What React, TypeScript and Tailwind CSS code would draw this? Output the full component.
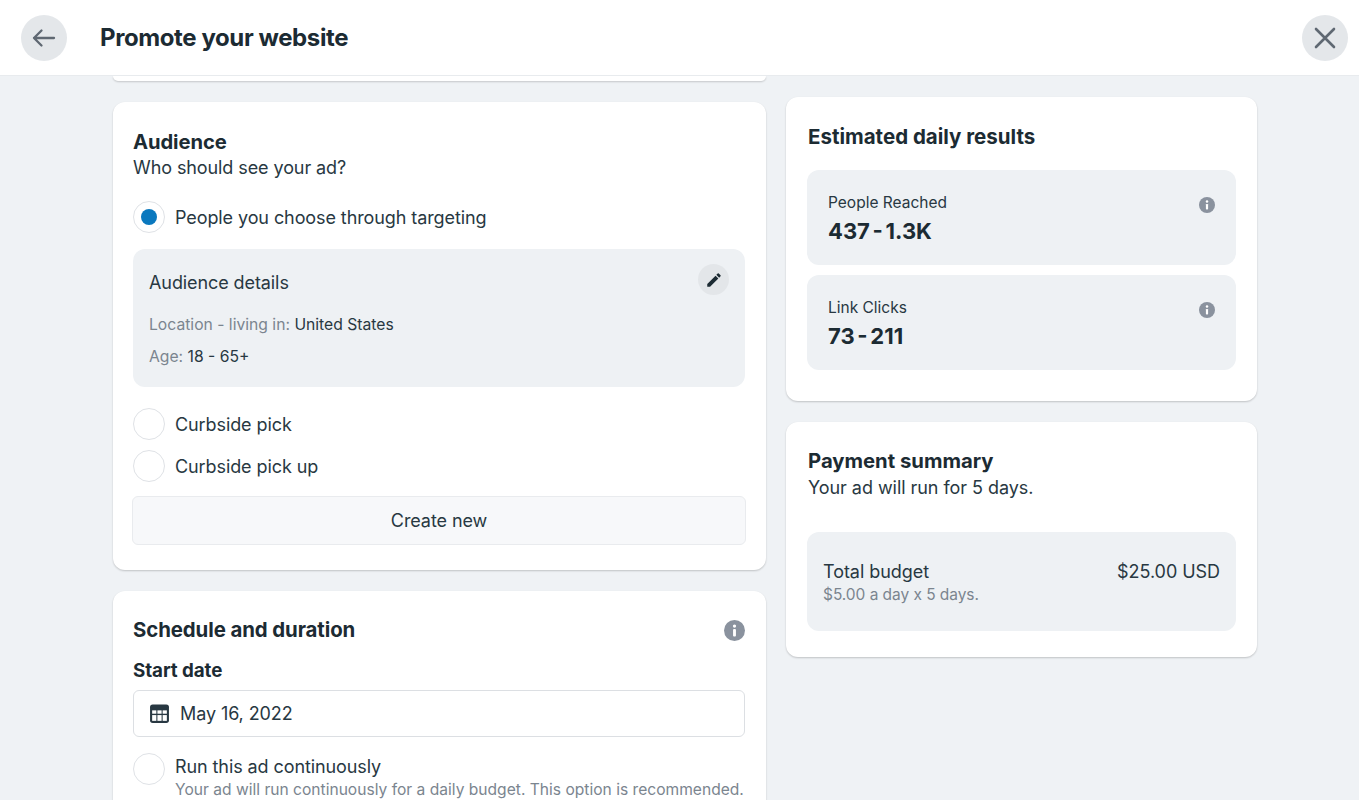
function InfoIcon({ className }: { className: string }) {
  return (
    <svg viewBox="0 0 16 16" className={className}>
      <circle cx="8" cy="8" r="8" fill="#8a929e" />
      <circle cx="8" cy="4.6" r="1.25" fill="#fff" />
      <rect x="6.9" y="6.9" width="2.2" height="5.6" rx="0.7" fill="#fff" />
    </svg>
  );
}

function Radio({ checked = false }: { checked?: boolean }) {
  return (
    <span className="w-8 h-8 shrink-0 rounded-full border border-[#dfe2e6] bg-white flex items-center justify-center">
      {checked && <span className="w-4 h-4 rounded-full bg-[#0a78be]" />}
    </span>
  );
}

function Stat({ label, value }: { label: string; value: string }) {
  return (
    <div className="h-[95px] rounded-xl bg-[#eef1f4] px-[21px] pt-[22px] flex justify-between">
      <div>
        <div className="text-[15.5px] leading-[21px] text-[#283842]">{label}</div>
        <div className="mt-[3px] text-[22px] leading-[30px] font-bold text-[#1c2b33] [word-spacing:-2.5px]">{value}</div>
      </div>
      <InfoIcon className="w-4 h-4 mt-[5px]" />
    </div>
  );
}

export default function App() {
  return (
    <div className="h-[800px] overflow-hidden flex flex-col bg-[#eff2f5] text-[#1c2b33] font-['Inter',sans-serif]">
      <header className="h-[76px] shrink-0 bg-white border-b border-[#e8ebee] flex items-center justify-between pl-[21px] pr-[11px] relative z-10">
        <div className="flex items-center">
          <button className="w-[46px] h-[46px] rounded-full bg-[#e4e7ea] flex items-center justify-center">
            <svg viewBox="0 0 24 24" className="w-6 h-6" fill="none" stroke="#5f6872" strokeWidth="2.3" strokeLinecap="round" strokeLinejoin="round">
              <path d="M2 12h20M9.5 4.5 2 12l7.5 7.5" />
            </svg>
          </button>
          <h1 className="ml-[33px] text-[24px] font-bold tracking-[-0.4px] text-[#1c2b33]">Promote your website</h1>
        </div>
        <button className="w-[46px] h-[46px] rounded-full bg-[#e4e7ea] flex items-center justify-center">
          <svg viewBox="0 0 24 24" className="w-6 h-6" fill="none" stroke="#5f6872" strokeWidth="2.6" strokeLinecap="round">
            <path d="M3 3l18 18M21 3 3 21" />
          </svg>
        </button>
      </header>

      <main className="flex items-start pl-[113px] gap-[20px]">
        {/* Left column */}
        <div className="w-[653px] shrink-0 flex flex-col tracking-[-0.09px]">
          <div className="h-[5px] bg-white rounded-b-xl shadow-[0_1px_2px_rgba(0,0,0,0.18)]" />

          <section className="mt-[21px] h-[468px] bg-white rounded-xl shadow-[0_1px_2px_rgba(0,0,0,0.2)] pl-[20px] pr-[21px] pt-[27px]">
            <h2 className="text-[20.2px] leading-[26px] font-bold">Audience</h2>
            <p className="text-[18px] leading-[26px] text-[#283842]">Who should see your ad?</p>

            <label className="mt-[20px] flex items-center gap-[10px] text-[18px] text-[#283842]">
              <Radio checked />
              People you choose through targeting
            </label>

            <div className="mt-[16px] h-[138px] rounded-xl bg-[#eef1f4] px-[16px] pt-[15px]">
              <div className="flex items-start justify-between">
                <span className="mt-[6px] text-[18px] leading-[26px] text-[#283842]">Audience details</span>
                <span className="w-[31px] h-[31px] rounded-full bg-[#e3e6e9] flex items-center justify-center">
                  <svg viewBox="0 0 24 24" className="w-[18px] h-[18px]" fill="#1c2b33">
                    <path d="M3 17.25V21h3.75L17.81 9.94l-3.75-3.75L3 17.25zM20.71 7.04a1 1 0 0 0 0-1.41l-2.34-2.34a1 1 0 0 0-1.41 0l-1.83 1.83 3.75 3.75 1.83-1.83z" />
                  </svg>
                </span>
              </div>
              <p className="mt-[18px] text-[15.7px] leading-[22px] tracking-normal text-[#7b858f]">
                Location - living in: <span className="text-[#283842]">United States</span>
              </p>
              <p className="mt-[10px] text-[15.7px] leading-[22px] tracking-normal text-[#7b858f]">
                Age: <span className="text-[#283842]">18 - 65+</span>
              </p>
            </div>

            <label className="mt-[21px] flex items-center gap-[10px] text-[18px] text-[#283842]">
              <Radio />
              Curbside pick
            </label>
            <label className="mt-[10px] flex items-center gap-[10px] text-[18px] text-[#283842]">
              <Radio />
              Curbside pick up
            </label>

            <button className="mt-[14px] -mx-px w-[614px] h-[49px] rounded-md bg-[#f7f8fa] border border-[#e9ebee] text-[18px] text-[#283842]">
              Create new
            </button>
          </section>

          <section className="mt-[21px] h-[260px] bg-white rounded-xl shadow-[0_1px_2px_rgba(0,0,0,0.2)] pl-[20px] pr-[21px] pt-[26px]">
            <div className="flex items-center justify-between">
              <h2 className="text-[20.4px] leading-[26px] font-bold">Schedule and duration</h2>
              <InfoIcon className="w-[21px] h-[21px]" />
            </div>
            <h3 className="mt-[15px] text-[18.8px] leading-[26px] font-bold">Start date</h3>
            <div className="mt-[6px] h-[47px] rounded-md border border-[#dcdfe3] flex items-center pl-[15px] gap-[10px] text-[18px] text-[#283842]">
              <svg viewBox="0 0 20 20" className="w-[21px] h-[21px]">
                <rect x="1" y="1.5" width="18" height="17.5" rx="2.5" fill="#283842" />
                <rect x="3" y="7" width="4" height="3.2" fill="#fff" />
                <rect x="8" y="7" width="4" height="3.2" fill="#fff" />
                <rect x="13" y="7" width="4" height="3.2" fill="#fff" />
                <rect x="3" y="11.5" width="4" height="5.5" fill="#fff" />
                <rect x="8" y="11.5" width="4" height="5.5" fill="#fff" />
                <rect x="13" y="11.5" width="4" height="5.5" fill="#fff" />
              </svg>
              May 16, 2022
            </div>
            <div className="mt-[16px] flex items-start gap-[10px]">
              <Radio />
              <div className="pt-[1px]">
                <div className="text-[18px] leading-[26px] text-[#283842]">Run this ad continuously</div>
                <div className="text-[15.6px] leading-[20px] tracking-normal text-[#7b858f] whitespace-nowrap">
                  Your ad will run continuously for a daily budget. This option is recommended.
                </div>
              </div>
            </div>
          </section>
        </div>

        {/* Right column */}
        <div className="w-[471px] shrink-0 flex flex-col pt-[21px]">
          <section className="h-[304px] bg-white rounded-xl shadow-[0_1px_2px_rgba(0,0,0,0.2)] px-[21px] pt-[27px]">
            <h2 className="pl-px text-[20.5px] leading-[26px] font-bold">Estimated daily results</h2>
            <div className="mt-[20px] flex flex-col gap-[10px]">
              <Stat label="People Reached" value="437 - 1.3K" />
              <Stat label="Link Clicks" value="73 - 211" />
            </div>
          </section>

          <section className="mt-[21px] h-[235px] bg-white rounded-xl shadow-[0_1px_2px_rgba(0,0,0,0.2)] px-[21px] pt-[26px]">
            <h2 className="pl-px text-[20.3px] leading-[26px] font-bold">Payment summary</h2>
            <p className="mt-px pl-px text-[18px] leading-[26px] text-[#283842] tracking-[-0.05px]">Your ad will run for 5 days.</p>
            <div className="mt-[31px] h-[99px] rounded-xl bg-[#eef1f4] px-[16px] pt-[27px] flex justify-between tracking-[-0.05px]">
              <div>
                <div className="text-[18px] leading-[26px] text-[#283842]">Total budget</div>
                <div className="text-[15.5px] leading-[20px] text-[#7b858f]">$5.00 a day x 5 days.</div>
              </div>
              <div className="text-[18px] leading-[26px] text-[#283842]">$25.00 USD</div>
            </div>
          </section>
        </div>
      </main>
    </div>
  );
}
